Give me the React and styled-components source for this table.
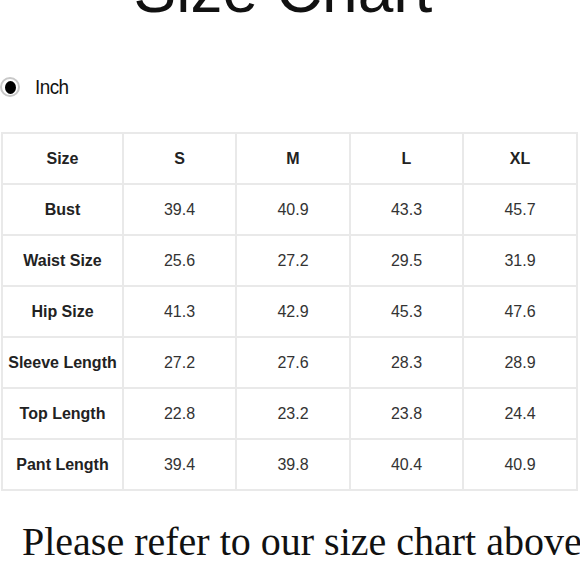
import React from "react";
import styled, { createGlobalStyle } from "styled-components";

const Global = createGlobalStyle`
  html, body { margin: 0; padding: 0; background: #fff; }
  body { font-family: "Liberation Sans", Arial, sans-serif; overflow: hidden; }
`;

const Page = styled.div`
  width: 580px;
  height: 580px;
  overflow: hidden;
  display: flex;
  flex-direction: column;
`;

const Title = styled.h1`
  margin: -42px 0 0 0;
  padding-right: 14px;
  font-family: "Liberation Sans", Arial, sans-serif;
  font-weight: 400;
  font-size: 64px;
  line-height: 64px;
  text-align: center;
  color: #111;
`;

const UnitRow = styled.div`
  display: flex;
  align-items: center;
  gap: 15px;
  margin-top: 55px;
  height: 20px;
  padding-left: 0;
`;

const Radio = styled.span`
  box-sizing: border-box;
  width: 20px;
  height: 20px;
  border-radius: 50%;
  border: 2px solid #c8c8c8;
  display: flex;
  align-items: center;
  justify-content: center;
  &::after {
    content: "";
    width: 11px;
    height: 13px;
    border-radius: 50%;
    background: #000;
  }
`;

const UnitLabel = styled.span`
  font-family: "Liberation Sans Narrow", "Liberation Sans", Arial, sans-serif;
  font-size: 21px;
  color: #111;
  letter-spacing: -0.6px;
  transform: scaleX(0.9);
  transform-origin: left center;
`;

const Table = styled.table`
  margin: 35px 0 0 1px;
  width: 575px;
  border-collapse: collapse;
  table-layout: fixed;
`;

const Col = styled.col`
  width: ${(p) => p.$w}px;
`;

const Row = styled.tr`
  height: 51px;
`;

const Cell = styled.td`
  border: 2px solid #e9e9e9;
  padding: 0;
  text-align: center;
  vertical-align: middle;
  font-family: "Liberation Sans", Arial, sans-serif;
  font-size: 16px;
  font-weight: ${(p) => (p.$bold ? 700 : 400)};
  color: ${(p) => (p.$bold ? "#222" : "#333")};
`;

const Note = styled.p`
  margin: 27px 0 0 22px;
  font-family: "Liberation Serif", "Times New Roman", serif;
  font-size: 40px;
  line-height: 48px;
  white-space: nowrap;
  color: #111;
`;

const sizes = ["S", "M", "L", "XL"];
const rows = [
  ["Bust", "39.4", "40.9", "43.3", "45.7"],
  ["Waist Size", "25.6", "27.2", "29.5", "31.9"],
  ["Hip Size", "41.3", "42.9", "45.3", "47.6"],
  ["Sleeve Length", "27.2", "27.6", "28.3", "28.9"],
  ["Top Length", "22.8", "23.2", "23.8", "24.4"],
  ["Pant Length", "39.4", "39.8", "40.4", "40.9"],
];

export default function App() {
  return (
    <Page>
      <Global />
      <Title>Size Chart</Title>
      <UnitRow>
        <Radio />
        <UnitLabel>Inch</UnitLabel>
      </UnitRow>
      <Table>
        <colgroup>
          <Col $w={121} />
          <Col $w={113} />
          <Col $w={114} />
          <Col $w={113} />
          <Col $w={114} />
        </colgroup>
        <tbody>
          <Row>
            <Cell $bold>Size</Cell>
            {sizes.map((s) => (
              <Cell key={s} $bold>
                {s}
              </Cell>
            ))}
          </Row>
          {rows.map((r) => (
            <Row key={r[0]}>
              <Cell $bold>{r[0]}</Cell>
              {r.slice(1).map((v, i) => (
                <Cell key={i}>{v}</Cell>
              ))}
            </Row>
          ))}
        </tbody>
      </Table>
      <Note>Please refer to our size chart above</Note>
    </Page>
  );
}
